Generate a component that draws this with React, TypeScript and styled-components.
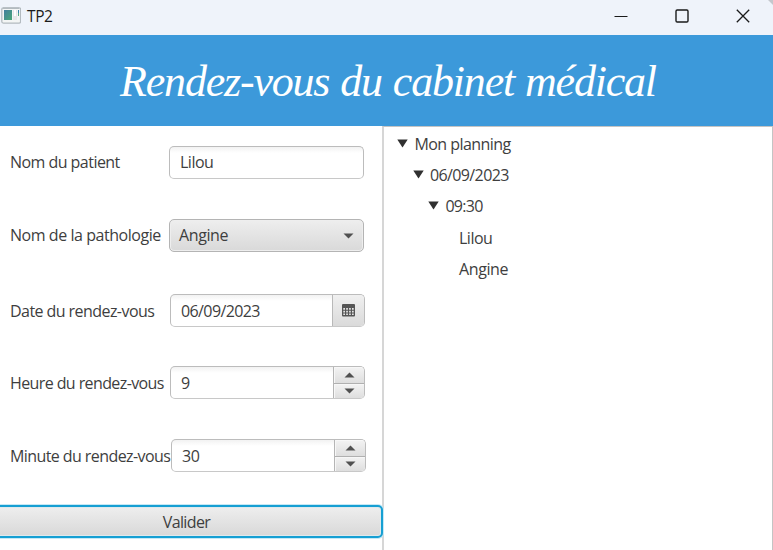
import React from "react";
import styled, { createGlobalStyle } from "styled-components";

const GlobalStyle = createGlobalStyle`
  * { box-sizing: border-box; }
  html, body { margin: 0; padding: 0; overflow: hidden; }
  body { background: #fff; }
`;

const Window = styled.div`
  width: 773px;
  height: 550px;
  display: flex;
  flex-direction: column;
  overflow: hidden;
  background: #fff;
  color: #3e3e3e;
  font-family: "Open Sans", "Noto Sans", sans-serif;
  font-size: 16px;
  line-height: 20px;
`;

const TitleBar = styled.div`
  height: 35px;
  flex: none;
  display: flex;
  align-items: center;
  padding: 0 23px 4px 1px;
  background: linear-gradient(225deg, #c4c7cc 3px, #eff3fa 4px);
`;

const AppName = styled.span`
  flex: 1;
  margin: 0 0 0 6px;
  color: #1b1b1b;
  font-size: 15.5px;
  letter-spacing: -0.4px;
`;

const WindowButtons = styled.div`
  display: flex;
  gap: 47px;
  svg { display: block; }
`;

const Banner = styled.header`
  height: 91px;
  flex: none;
  display: flex;
  justify-content: center;
  align-items: center;
  background: #3c99da;
`;

const Heading = styled.h1`
  margin: 2px 0 0 3px;
  color: #fff;
  font-family: "Monotype Corsiva", "Liberation Serif", serif;
  font-style: italic;
  font-weight: 400;
  font-size: 44px;
  line-height: 60px;
  white-space: nowrap;
  letter-spacing: -1.2px;
  word-spacing: 1.2px;
`;

const Content = styled.main`
  flex: 1;
  display: flex;
  min-height: 0;
`;

const Form = styled.section`
  width: 382px;
  flex: none;
  display: flex;
  flex-direction: column;
`;

const Text = styled.span<{ $spacing?: number }>`
  white-space: nowrap;
  margin-top: -2px;
  letter-spacing: ${(p) => p.$spacing ?? -0.5}px;
`;

const Row = styled.div<{ $before: number; $label: number; $lowText?: boolean }>`
  display: grid;
  grid-template-columns: ${(p) => p.$label}px 195px;
  height: 33px;
  flex: none;
  margin-top: ${(p) => p.$before}px;
  align-items: center;
  ${Text} { margin-top: ${(p) => (p.$lowText ? 0 : -2)}px; }
`;

const Label = styled(Text)`
  padding-left: 10px;
`;

const Field = styled.div`
  height: 33px;
  display: flex;
  align-items: center;
  padding-left: 10px;
  border: 1.5px solid #bcbcbc;
  border-bottom-color: #c8c8c8;
  border-radius: 5px;
  background: linear-gradient(#f2f2f2, #fff 6px);
  overflow: hidden;
`;

const Combo = styled(Field)`
  justify-content: space-between;
  padding: 0 9px;
  border-color: #b4b4b4;
  background: linear-gradient(#eeeeee, #d9d9d9);
  box-shadow: inset 0 0 0 1px #eeeeee;
`;

const FieldText = styled(Text)`
  flex: 1;
`;

const DateButton = styled.div`
  width: 32px;
  height: 100%;
  display: flex;
  justify-content: center;
  align-items: center;
  border-left: 1px solid #b9b9b9;
  background: linear-gradient(#f0f0f0, #dadada);
`;

const Stepper = styled.div`
  width: 31px;
  height: 100%;
  display: grid;
  grid-template-rows: 1fr 1fr;
  border-left: 1px solid #b5b5b5;
`;

const Step = styled.div`
  display: flex;
  justify-content: center;
  align-items: center;
  background: linear-gradient(#f3f3f3, #dedede);
  box-shadow: inset 1px 1px #f7f7f7;
  & + & { border-top: 1px solid #b0b0b0; }
`;

const Submit = styled.button`
  height: 33px;
  width: 384px;
  flex: none;
  position: relative;
  margin: 33px 0 0 -1px;
  padding: 1px 7px 0 0;
  border: 2px solid #169fd3;
  border-left: 0;
  border-radius: 0 5px 5px 0;
  background: linear-gradient(#eeeeee, #d8d8d8);
  box-shadow: 0 0 0 1px #c5e9f6, inset 0 0 0 1px #dfe9ec;
  color: inherit;
  font: inherit;
  line-height: 26px;
  letter-spacing: -0.6px;
`;

const Planning = styled.section`
  flex: 1;
  border: 1px solid #c4c4c4;
  border-left: 2px solid #d6d6d6;
  border-bottom: 0;
  padding-top: 2px;
`;

const TreeRow = styled.div<{ $depth: number }>`
  height: 31.4px;
  display: flex;
  align-items: center;
  gap: 6px;
  padding-left: ${(p) => 13.4 + p.$depth * 15.5}px;
`;

const Leaf = styled(TreeRow)`
  padding-left: 75px;
`;

const Disclosure = styled.svg`
  width: 11px;
  height: 9px;
  flex: none;
  margin-top: -3px;
`;

const OpenArrow = () => (
  <Disclosure viewBox="0 0 11 9">
    <path d="M.3.5h10.4L5.5 8.6z" fill="#303030" />
  </Disclosure>
);

const Arrow = ({ up = false }: { up?: boolean }) => (
  <svg width="11" height="6" viewBox="0 0 11 6">
    <path d={up ? "M.5 5.5h10L5.5.5z" : "M.5.5h10l-5 5z"} fill="#505050" />
  </svg>
);

const AppIcon = () => (
  <svg width="20" height="17" viewBox="0 0 20 17">
    <defs>
      <linearGradient id="pane" x1="0" y1="0" x2="1" y2="1">
        <stop offset="0" stopColor="#417e9e" />
        <stop offset="1" stopColor="#4aa878" />
      </linearGradient>
    </defs>
    <rect x=".8" y=".8" width="18.8" height="15.3" rx="1.5" fill="#f3f5f5" stroke="#b4bbc0" strokeWidth="1.3" />
    <path d="M2 1.2h16" stroke="#a6adb3" />
    <path d="M3 3h8v10H3z" fill="url(#pane)" />
    <path d="M12 3h4v10h-4z" fill="#e6e8e9" />
    <path d="M13 3h2v6h-2z" fill="#fff" />
    <path d="M17.5 3v3" stroke="#3e83ad" />
    <path d="M17.5 6v3" stroke="#58aa84" />
  </svg>
);

const CalendarIcon = () => (
  <svg width="13" height="13" viewBox="0 0 13 13">
    <rect width="13" height="12.5" rx="1" fill="#555" />
    <path
      d="M1.3 4h1.7v1.7H1.3zm2.9 0h1.7v1.7H4.2zm2.9 0h1.7v1.7H7.1zm2.9 0h1.7v1.7H10zM1.3 6.7h1.7v1.7H1.3zm2.9 0h1.7v1.7H4.2zm2.9 0h1.7v1.7H7.1zm2.9 0h1.7v1.7H10zM1.3 9.4h1.7v1.7H1.3zm2.9 0h1.7v1.7H4.2zm2.9 0h1.7v1.7H7.1zm2.9 0h1.7v1.7H10z"
      fill="#e6e6e6"
    />
  </svg>
);

const SpinnerButtons = () => (
  <Stepper>
    <Step><Arrow up /></Step>
    <Step><Arrow /></Step>
  </Stepper>
);

export default function App() {
  return (
    <Window>
      <GlobalStyle />
      <TitleBar>
        <AppIcon />
        <AppName>TP2</AppName>
        <WindowButtons>
          <svg width="14" height="14" viewBox="0 0 14 14"><path d="M.5 7.5h13" stroke="#1a1a1a" /></svg>
          <svg width="14" height="14" viewBox="0 0 14 14"><rect x="1" y="1" width="12" height="12" rx="1.2" fill="none" stroke="#1a1a1a" strokeWidth="1.4" /></svg>
          <svg width="14" height="14" viewBox="0 0 14 14"><path d="m.8.8 12.4 12.4m0-12.4L.8 13.2" stroke="#1a1a1a" strokeWidth="1.3" /></svg>
        </WindowButtons>
      </TitleBar>
      <Banner>
        <Heading>Rendez-vous du cabinet médical</Heading>
      </Banner>
      <Content>
        <Form>
          <Row $before={20} $label={169}>
            <Label $spacing={-0.54}>Nom du patient</Label>
            <Field><FieldText>Lilou</FieldText></Field>
          </Row>
          <Row $before={40} $label={169}>
            <Label $spacing={-0.45}>Nom de la pathologie</Label>
            <Combo><Text $spacing={-0.4}>Angine</Text><Arrow /></Combo>
          </Row>
          <Row $before={42} $label={170} $lowText>
            <Label $spacing={-0.56}>Date du rendez-vous</Label>
            <Field><FieldText $spacing={-0.6}>06/09/2023</FieldText><DateButton><CalendarIcon /></DateButton></Field>
          </Row>
          <Row $before={39} $label={170} $lowText>
            <Label $spacing={-0.6}>Heure du rendez-vous</Label>
            <Field><FieldText>9</FieldText><SpinnerButtons /></Field>
          </Row>
          <Row $before={40} $label={171} $lowText>
            <Label $spacing={-0.58}>Minute du rendez-vous</Label>
            <Field><FieldText>30</FieldText><SpinnerButtons /></Field>
          </Row>
          <Submit>Valider</Submit>
        </Form>
        <Planning>
          <TreeRow $depth={0}><OpenArrow /><Text $spacing={-0.55}>Mon planning</Text></TreeRow>
          <TreeRow $depth={1}><OpenArrow /><Text $spacing={-0.6}>06/09/2023</Text></TreeRow>
          <TreeRow $depth={2}><OpenArrow /><Text $spacing={-0.7}>09:30</Text></TreeRow>
          <Leaf $depth={3}><Text>Lilou</Text></Leaf>
          <Leaf $depth={3}><Text $spacing={-0.4}>Angine</Text></Leaf>
        </Planning>
      </Content>
    </Window>
  );
}
